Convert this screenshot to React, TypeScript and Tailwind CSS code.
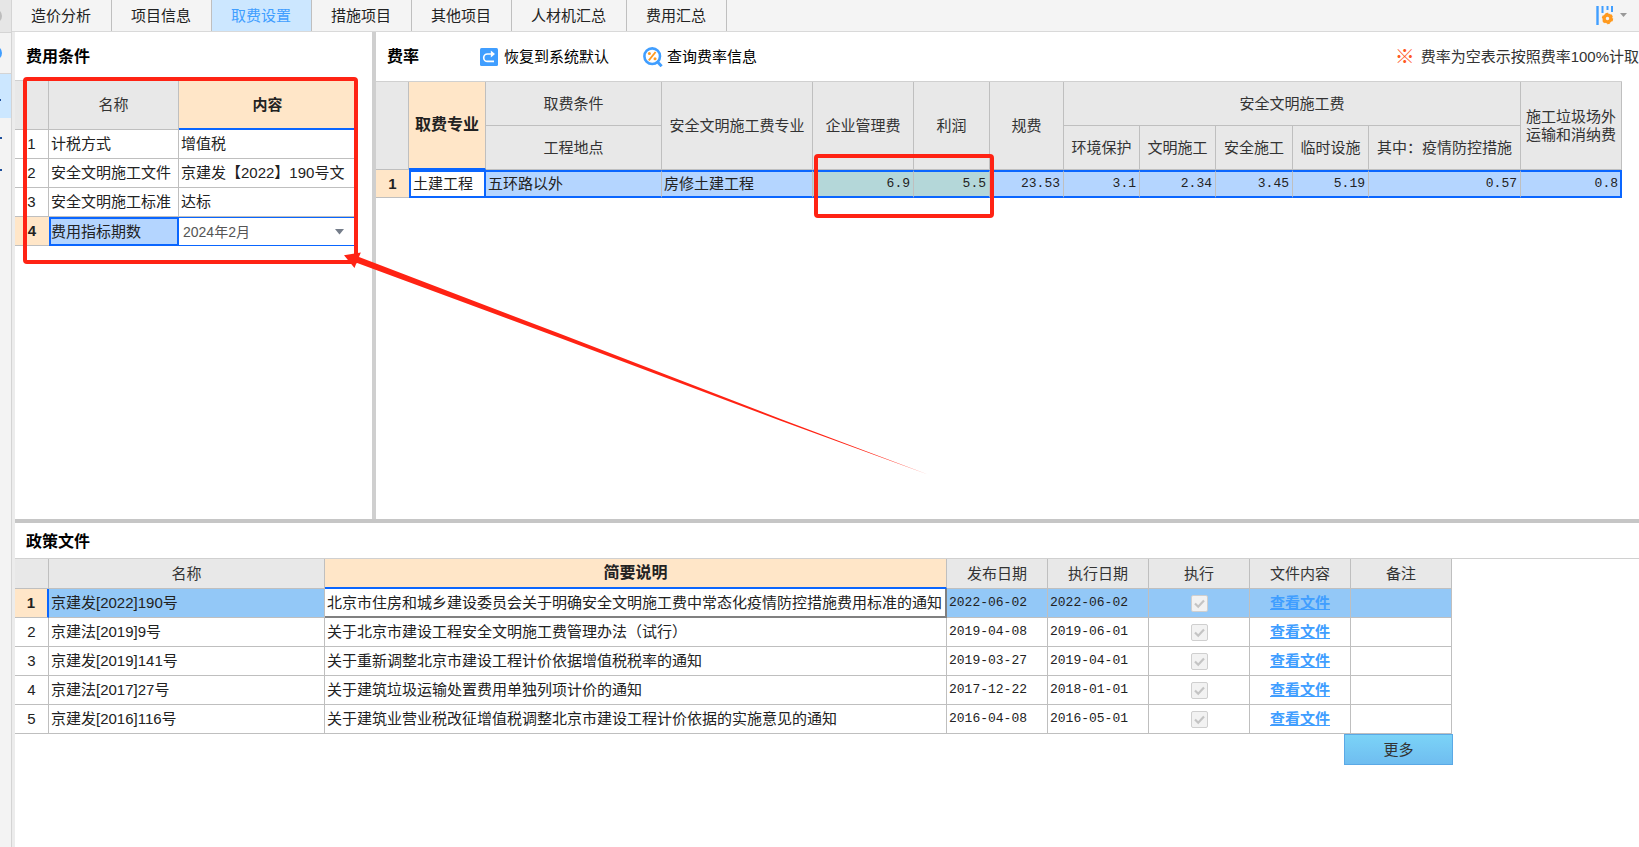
import React from "react";

const conditions = [
  { name: "计税方式", value: "增值税" },
  { name: "安全文明施工文件", value: "京建发【2022】190号文" },
  { name: "安全文明施工标准", value: "达标" },
];

const rates = ["23.53", "3.1", "2.34", "3.45", "5.19", "0.57", "0.8"];

const policies = [
  { name: "京建发[2022]190号", desc: "北京市住房和城乡建设委员会关于明确安全文明施工费中常态化疫情防控措施费用标准的通知", issued: "2022-06-02", effective: "2022-06-02" },
  { name: "京建法[2019]9号", desc: "关于北京市建设工程安全文明施工费管理办法（试行）", issued: "2019-04-08", effective: "2019-06-01" },
  { name: "京建发[2019]141号", desc: "关于重新调整北京市建设工程计价依据增值税税率的通知", issued: "2019-03-27", effective: "2019-04-01" },
  { name: "京建法[2017]27号", desc: "关于建筑垃圾运输处置费用单独列项计价的通知", issued: "2017-12-22", effective: "2018-01-01" },
  { name: "京建发[2016]116号", desc: "关于建筑业营业税改征增值税调整北京市建设工程计价依据的实施意见的通知", issued: "2016-04-08", effective: "2016-05-01" },
];

const tabs = ["造价分析", "项目信息", "取费设置", "措施项目", "其他项目", "人材机汇总", "费用汇总"];

const head = "border-r border-b border-[#bfbfbf] bg-[#e8e8e8] p-0 text-center font-normal text-[#333]";
const cell = "border-r border-b border-[#bfbfbf] px-0.5 py-0 truncate";
const mono = "font-['Liberation_Mono','Noto_Sans_CJK_SC',monospace] text-[13px]";

function RestoreIcon() {
  return (
    <svg width="18" height="18" viewBox="0 0 18 18" aria-hidden="true">
      <rect width="18" height="18" rx="1.5" fill="#409eff" />
      <path d="M11.5 6H7.4a3.6 3.6 0 0 0 0 7.4H14" fill="none" stroke="#fff" strokeWidth="1.6" />
      <path d="M10.8 2.6 15 6l-4.2 3.4z" fill="#fff" />
    </svg>
  );
}

function QueryIcon() {
  return (
    <svg width="20" height="20" viewBox="0 0 20 20" aria-hidden="true">
      <circle cx="9.2" cy="9.2" r="7.8" fill="#fff" stroke="#409eff" strokeWidth="2.6" />
      <path d="m14.4 14.8 4.2 4.4" stroke="#409eff" strokeWidth="3" />
      <path d="m12.6 5-6.8 8.4" stroke="#ff9a1f" strokeWidth="1.8" />
      <circle cx="6.4" cy="6.6" r="1.5" fill="#ff9a1f" />
      <circle cx="12" cy="11.8" r="1.5" fill="#ff9a1f" />
    </svg>
  );
}

function ColumnSettingsIcon() {
  return (
    <svg width="18" height="20" viewBox="0 0 18 20" aria-hidden="true">
      <path d="M1.5 0v19" stroke="#409eff" strokeWidth="2.4" />
      <path d="M6.5 0v7M11.5 0v4M16 0v6" stroke="#409eff" strokeWidth="2" />
      <circle cx="11.5" cy="12.5" r="3.4" fill="none" stroke="#ff9a1f" strokeWidth="3.4" />
      <circle cx="11.5" cy="12.5" r="4.8" fill="none" stroke="#ff9a1f" strokeWidth="1.8" strokeDasharray="2.6 2.43" />
    </svg>
  );
}

function Tick() {
  return (
    <svg className="pointer-events-none col-start-1 row-start-1" width="17" height="17" viewBox="0 0 17 17" aria-hidden="true">
      <path d="m4 8.5 3.2 3.2L13 5.6" fill="none" stroke="#c4c4c4" strokeWidth="2.2" />
    </svg>
  );
}

function Rail() {
  return (
    <aside className="flex w-3 shrink-0 flex-col overflow-hidden border-r border-[#d4d4d4] bg-[#f3f3f3]">
      <div className="flex h-[33px] items-center border-b border-[#d4d4d4] bg-[#e6e6e6]">
        <span className="-ml-3 size-3.5 shrink-0 rounded-full bg-[#bdbdbd]" />
      </div>
      <div className="flex h-[41px] items-center border-b border-[#d4d4d4]">
        <span className="-ml-3 size-3.5 shrink-0 rounded-full bg-[#409eff]" />
      </div>
      <div className="flex h-11 items-center bg-[#cce7ff] pt-2">
        <span className="h-0.5 w-px bg-[#1e4f9c]" />
      </div>
      <div className="flex h-10 items-center">
        <span className="size-0.5 bg-[#1e4f9c]" />
      </div>
      <div className="flex h-6 items-center">
        <span className="size-0.5 bg-[#1e4f9c]" />
      </div>
    </aside>
  );
}

function ConditionTable() {
  return (
    <table className="w-[341px] table-fixed border-separate border-spacing-0 border-t border-t-[#d0d0d0]">
      <colgroup>
        <col className="w-[34px]" />
        <col className="w-[130px]" />
        <col />
      </colgroup>
      <thead>
        <tr className="h-[49px]">
          <th className={head} />
          <th className={head}>名称</th>
          <th className="border-b-2 border-[#0a66ff] bg-[#ffe6c8] p-0 text-center font-bold">内容</th>
        </tr>
      </thead>
      <tbody>
        {conditions.map((c, i) => (
          <tr key={c.name} className="h-[29px]">
            <td className={`${cell} text-center`}>{i + 1}</td>
            <td className={cell}>{c.name}</td>
            <td className={cell}>{c.value}</td>
          </tr>
        ))}
        <tr className="h-[29px]">
          <td className="border-b border-[#bfbfbf] bg-[#ffe6c8] p-0 text-center font-bold">4</td>
          <td className="border-2 border-[#0a66ff] bg-[#b4d5ff] p-0">
            <label htmlFor="period">费用指标期数</label>
          </td>
          <td className="border-y border-[#0a66ff] p-0">
            <div className="grid items-center">
              <select id="period" className="col-start-1 row-start-1 w-full appearance-none bg-transparent pl-1 text-sm text-[#555]">
                <option>2024年2月</option>
              </select>
              <svg className="pointer-events-none col-start-1 row-start-1 mr-3 justify-self-end" width="9" height="6" viewBox="0 0 9 6" aria-hidden="true">
                <path d="M0 0h9L4.5 5.5z" fill="#757d8a" />
              </svg>
            </div>
          </td>
        </tr>
      </tbody>
    </table>
  );
}

function RateTable() {
  const picked = "border-y-2 border-y-[#0a66ff] border-r border-r-[#bfbfbf] bg-[#b4d5ff] px-0.5 py-0";
  return (
    <table className="w-[1246px] table-fixed border-separate border-spacing-0 border-t border-t-[#d0d0d0]">
      <colgroup>
        <col className="w-[33px]" />
        <col className="w-[77px]" />
        <col className="w-[176px]" />
        <col className="w-[151px]" />
        <col className="w-[101px]" />
        <col className="w-[76px]" />
        <col className="w-[74px]" />
        <col className="w-[76px]" />
        <col className="w-[76px]" />
        <col className="w-[77px]" />
        <col className="w-[76px]" />
        <col className="w-[152px]" />
        <col className="w-[101px]" />
      </colgroup>
      <thead>
        <tr className="h-11">
          <th rowSpan={2} className={head} />
          <th rowSpan={2} className="border-r border-b-2 border-r-[#bfbfbf] border-b-[#0a66ff] bg-[#ffe6c8] p-0 text-center text-base font-bold">取费专业</th>
          <th className={head}>取费条件</th>
          <th rowSpan={2} className={head}>安全文明施工费专业</th>
          <th rowSpan={2} className={head}>企业管理费</th>
          <th rowSpan={2} className={head}>利润</th>
          <th rowSpan={2} className={head}>规费</th>
          <th colSpan={5} className={head}>安全文明施工费</th>
          <th rowSpan={2} className={`${head} leading-[18px]`}>
            施工垃圾场外
            <br />
            运输和消纳费
          </th>
        </tr>
        <tr className="h-11">
          <th className={head}>工程地点</th>
          <th className={head}>环境保护</th>
          <th className={head}>文明施工</th>
          <th className={head}>安全施工</th>
          <th className={head}>临时设施</th>
          <th className={head}>其中：疫情防控措施</th>
        </tr>
      </thead>
      <tbody>
        <tr className="h-7">
          <td className="border-b border-[#bfbfbf] bg-[#ffe6c8] p-0 text-center font-bold">1</td>
          <td className="border-2 border-[#0a66ff] bg-white px-0.5 py-0">土建工程</td>
          <td className={picked}>五环路以外</td>
          <td className={picked}>房修土建工程</td>
          <td className={`border-y-2 border-r border-y-[#0a66ff] border-r-[#bfbfbf] bg-[#b4d7d9] px-[3px] py-0 text-right ${mono}`}>6.9</td>
          <td className={`border-y-2 border-r border-y-[#0a66ff] border-r-[#bfbfbf] bg-[#b4d7d9] px-[3px] py-0 text-right ${mono}`}>5.5</td>
          {rates.map((r, i) => (
            <td
              key={i}
              className={`border-y-2 border-y-[#0a66ff] bg-[#b4d5ff] py-0 text-right ${i === rates.length - 1 ? "border-r-2 border-r-[#0a66ff] px-0.5" : "border-r border-r-[#bfbfbf] px-[3px]"} ${mono}`}
            >
              {r}
            </td>
          ))}
        </tr>
      </tbody>
    </table>
  );
}

function PolicyTable() {
  return (
    <table className="w-[1437px] table-fixed border-separate border-spacing-0">
      <colgroup>
        <col className="w-[34px]" />
        <col className="w-[276px]" />
        <col className="w-[622px]" />
        <col className="w-[101px]" />
        <col className="w-[101px]" />
        <col className="w-[101px]" />
        <col className="w-[101px]" />
        <col className="w-[101px]" />
      </colgroup>
      <thead>
        <tr className="h-[30px]">
          <th className={head} />
          <th className={head}>名称</th>
          <th className="border-r border-b-2 border-r-[#bfbfbf] border-b-[#0a66ff] bg-[#ffe6c8] p-0 text-center text-base leading-6 font-bold">简要说明</th>
          <th className={head}>发布日期</th>
          <th className={head}>执行日期</th>
          <th className={head}>执行</th>
          <th className={head}>文件内容</th>
          <th className={head}>备注</th>
        </tr>
      </thead>
      <tbody>
        {policies.map((p, i) => {
          const on = i === 0;
          const bg = on ? "bg-[#93c8f7]" : "bg-white";
          return (
            <tr key={p.name} className="h-[29px]">
              <td className={on ? "border-r-2 border-b border-r-[#0a66ff] border-b-[#bfbfbf] bg-[#ffe6c8] p-0 text-center font-bold" : `${cell} text-center`}>{i + 1}</td>
              <td className={`${cell} ${bg}`}>{p.name}</td>
              <td className={on ? "overflow-hidden border-r-2 border-b-2 border-[#808080] bg-white px-0.5 py-0 whitespace-nowrap" : cell}>{p.desc}</td>
              <td className={`${cell} ${bg} ${mono}`}>{p.issued}</td>
              <td className={`${cell} ${bg} ${mono}`}>{p.effective}</td>
              <td className={`${cell} ${bg}`}>
                <div className="grid place-items-center">
                  <input type="checkbox" defaultChecked disabled aria-label={`执行 ${p.name}`} className="col-start-1 row-start-1 size-[17px] appearance-none rounded-xs border border-[#cfcfcf] bg-[#f2f2f2]" />
                  <Tick />
                </div>
              </td>
              <td className={`${cell} ${bg} text-center`}>
                <a href="#file" className="font-bold text-[#409eff] underline">查看文件</a>
              </td>
              <td className={`${cell} ${bg}`} />
            </tr>
          );
        })}
      </tbody>
    </table>
  );
}

export default function App() {
  return (
    <div className="relative flex min-h-screen overflow-hidden bg-white font-['Liberation_Sans','Noto_Sans_CJK_SC',sans-serif] text-[15px] leading-5 text-[#222]">
      <Rail />
      <div className="flex min-w-0 flex-1 flex-col">
        <header className="flex h-8 items-stretch justify-between border-b border-[#d9d9d9] bg-[#f4f4f4]">
          <nav className="flex">
            {tabs.map((t) => (
              <button
                key={t}
                type="button"
                className={`border-r border-[#bfbfbf] pr-5 pl-[19px] whitespace-nowrap ${t === "取费设置" ? "bg-[#cce7ff] text-[#409eff]" : ""}`}
              >
                {t}
              </button>
            ))}
          </nav>
          <button type="button" aria-label="列设置" className="flex items-center gap-1.5 pr-3">
            <ColumnSettingsIcon />
            <svg width="7" height="5" viewBox="0 0 7 5" aria-hidden="true">
              <path d="M0 0h7L3.5 4z" fill="#999" />
            </svg>
          </button>
        </header>

        <main className="flex flex-1 flex-col border-l-3 border-[#ececec]">
          <div className="flex h-[491px] border-b-4 border-[#c6c6c6]">
            <section className="w-[361px] shrink-0 border-r-4 border-[#cfcfcf]">
              <h2 className="flex h-12 items-center px-[11px] pt-0.5 text-base font-bold text-black">费用条件</h2>
              <ConditionTable />
            </section>
            <section className="min-w-0 flex-1 overflow-hidden">
              <div className="flex h-[49px] items-center text-black">
                <h2 className="pl-[11px] text-base font-bold">费率</h2>
                <button type="button" className="ml-[61px] flex items-center gap-1.5">
                  <RestoreIcon />
                  恢复到系统默认
                </button>
                <button type="button" className="ml-[34px] flex items-center gap-1">
                  <QueryIcon />
                  查询费率信息
                </button>
                <p className="ml-auto flex items-center gap-1.5 whitespace-nowrap text-[#333]">
                  <span className="text-xl text-[#ff5a1f]">※</span>
                  费率为空表示按照费率100%计取
                </p>
              </div>
              <RateTable />
            </section>
          </div>

          <section className="flex flex-col">
            <h2 className="flex h-9 items-center border-b border-[#d0d0d0] px-[11px] pt-0.5 text-base font-bold text-black">政策文件</h2>
            <div className="flex w-[1438px] flex-col">
              <PolicyTable />
              <button type="button" className="h-[31px] w-[109px] self-end border border-[#5aa9e6] bg-linear-to-b from-[#7bd3f7] to-[#6fbdf0] text-[#333]">
                更多
              </button>
            </div>
          </section>
        </main>
      </div>

      <div className="pointer-events-none absolute top-[77px] left-[23px] h-[187px] w-[335px] rounded-sm border-4 border-[#ff2314]" />
      <div className="pointer-events-none absolute top-[154px] left-[814px] h-16 w-[180px] rounded-sm border-4 border-[#ff2314]" />
      <svg className="pointer-events-none absolute top-[250px] left-[340px]" width="590" height="230" viewBox="340 250 590 230" aria-hidden="true">
        <path d="M344 255.3 360.8 252.5 359 257 560 333.8 780 418.8 928 474.5 780 420.6 560 338 356.5 262.8 354.5 268z" fill="#ff2314" />
      </svg>
    </div>
  );
}
